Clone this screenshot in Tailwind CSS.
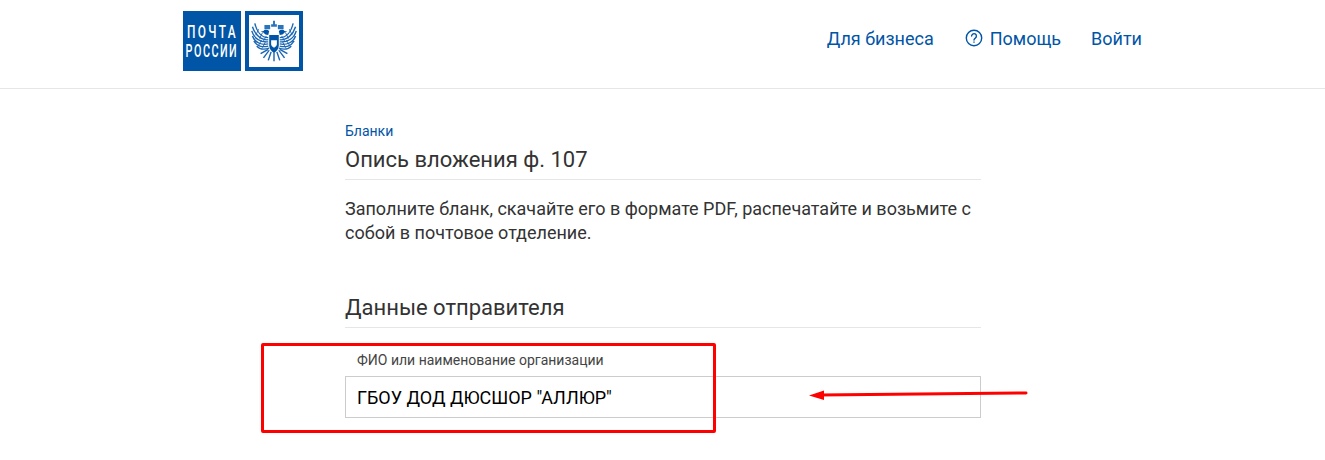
<!DOCTYPE html>
<html lang="ru">
<head>
  <meta charset="UTF-8" />
  <title>Опись вложения ф. 107</title>
  <script src="https://cdn.jsdelivr.net/npm/@tailwindcss/browser@4"></script>
</head>
<body class="relative bg-white h-[460px] overflow-hidden font-['Roboto',sans-serif] text-[#333]">

  <header class="h-[89px] border-b border-[#e6e6e6] px-[183px] pt-[11px] flex justify-between items-start">
    <div class="flex gap-1 h-[60px]">
      <div class="w-[58px] h-[60px] shrink-0 bg-[#0055a6] flex flex-col justify-center items-center gap-[1px] text-white font-medium text-[18px] leading-[18px]">
        <span class="scale-x-[0.66] tracking-[3.5px] whitespace-nowrap">ПОЧТА</span>
        <span class="scale-x-[0.6] tracking-[2.5px] whitespace-nowrap">РОССИИ</span>
      </div>
      <div class="w-[58px] h-[60px] shrink-0 border-[4px] border-[#0055a6] flex items-center justify-center">
        <svg width="46" height="42" viewBox="0 0 48 50" preserveAspectRatio="none" fill="none" stroke="#1a66b3" stroke-width="1.500">
          <!-- crown -->
          <path d="M21 5h6v3h-6zM14 6h6v5h-6zM28 6h6v5h-6zM23 1h2v4h-2z" fill="#2a73bd" stroke="none"/>
          <!-- heads -->
          <path d="M19 13c-2-2-5-2-6 0l-3 1 3 1c1 2 3 3 5 3zM29 13c2-2 5-2 6 0l3 1-3 1c-1 2-3 3-5 3z" fill="#0055a6" stroke="none"/>
          <!-- left wing -->
          <path d="M18 21C11 21 6 14 4 4M18 23.500C10 24 4 17 1.500 8M18 26C10 27 3 22 .8 13M18 28.500C11 30 4 27 1.500 19M18 31C12 33 6 31 3 25M19 33.500C14 35.500 9 35 6 31"/>
          <path d="M12 15L9 22M8 11L5 18M16 19L13 25M11 24L8 30M15 26L12 33" stroke-width="1"/>
          <!-- right wing -->
          <path d="M30 21C37 21 42 14 44 4M30 23.500C38 24 44 17 46.500 8M30 26C38 27 45 22 47.200 13M30 28.500C37 30 44 27 46.500 19M30 31C36 33 42 31 45 25M29 33.500C34 35.500 39 35 42 31"/>
          <path d="M36 15L39 22M40 11L43 18M32 19L35 25M37 24L40 30M33 26L36 33" stroke-width="1"/>
          <!-- body and tail -->
          <path d="M19 18h10v12c0 4-2 7-5 9-3-2-5-5-5-9z" fill="#0055a6" stroke="none"/>
          <path d="M24 38v11M21 38l-3 10M27 38l3 10M19 36l-6 9M29 36l6 9M18 35l-8 5M30 35l8 5"/>
          <!-- shield -->
          <path d="M21 24h6v5c0 2-1.500 3-3 4-1.500-1-3-2-3-4z" fill="#fff" stroke="none"/>
        </svg>
      </div>
    </div>
    <nav class="flex items-center h-[54px] text-[18px] text-[#0055a6]">
      <a class="mr-[31px]">Для бизнеса</a>
      <svg class="mr-[7px]" width="18" height="18" viewBox="0 0 18 18" fill="none" stroke="#0055a6" stroke-width="1.400">
        <circle cx="9" cy="9" r="7.700"/>
        <path d="M6.600 7.100a2.400 2.400 0 1 1 3.700 2c-.9.6-1.300 1-1.300 1.900" stroke-linecap="round"/>
        <path d="M9 12.400v1.300"/>
      </svg>
      <a class="mr-[30px]">Помощь</a>
      <a>Войти</a>
    </nav>
  </header>

  <main class="ml-[345px] w-[636px] pt-[34px]">
    <a class="block text-[14px] leading-[16px] text-[#0055a6]">Бланки</a>
    <h1 class="mt-[3px] text-[22px] leading-[35px] pb-[2px] border-b border-[#e6e6e6]">Опись вложения ф. 107</h1>
    <p class="mt-[17px] text-[18px] leading-[24px]">Заполните бланк, скачайте его в формате PDF, распечатайте и возьмите с собой в почтовое отделение.</p>
    <h2 class="mt-[45px] text-[22px] leading-[35px] pb-[2px] border-b border-[#e6e6e6]">Данные отправителя</h2>
    <label class="block mt-[24px] pl-[12px] text-[14px] leading-[16px] text-[#444]">ФИО или наименование организации</label>
    <div class="mt-[8px] h-[42px] border border-[#ccc] pl-[11px] flex items-center text-[18px] text-black">ГБОУ ДОД ДЮСШОР "АЛЛЮР"</div>
  </main>

  <div class="absolute left-[261px] top-[343px] w-[455px] h-[90px] border-[3px] border-[#f00] rounded-[2px]"></div>
  <svg class="absolute left-[800px] top-[385px]" width="235" height="20" viewBox="0 0 235 20">
    <path d="M226 8 L20 10" stroke="#f00" stroke-width="3" stroke-linecap="round"/>
    <path d="M9 10.500 L24 5.500 L24 15Z" fill="#f00"/>
  </svg>
</body>
</html>
